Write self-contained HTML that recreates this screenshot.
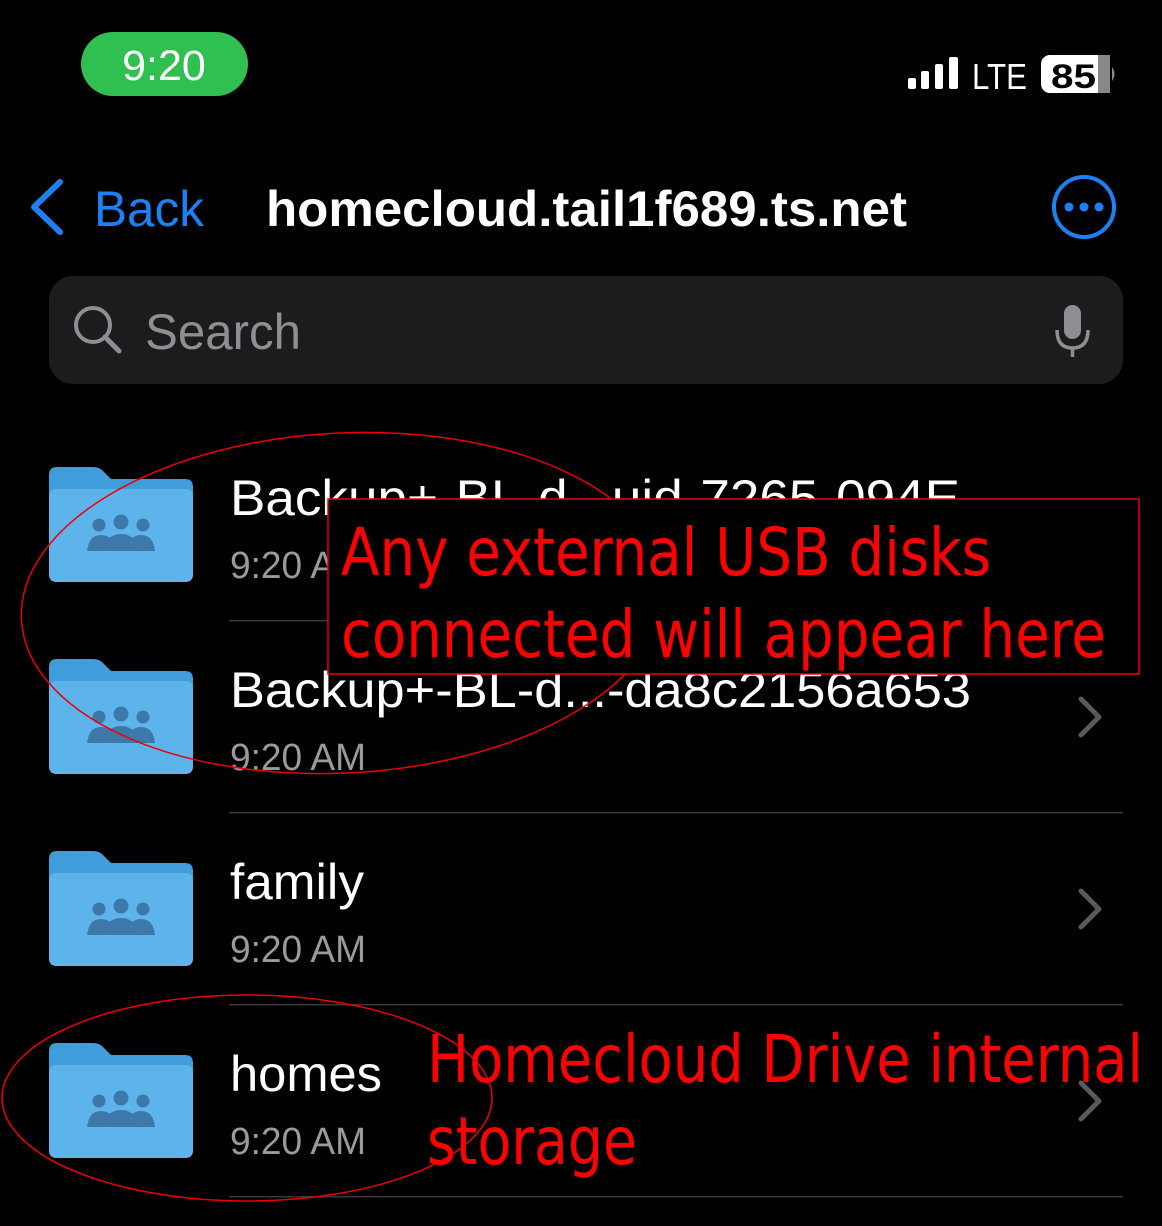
<!DOCTYPE html>
<html><head><meta charset="utf-8"><style>
html,body{margin:0;padding:0;background:#000;width:1162px;height:1226px;overflow:hidden}
svg{display:block}
</style></head><body>
<svg width="1162" height="1226" viewBox="0 0 1162 1226" xmlns="http://www.w3.org/2000/svg" font-family="Liberation Sans, sans-serif">
<defs>
<g id="folder">
<path d="M0 8 Q0 0 8 0 H44 Q50 0 54 4 L62 12 H136 Q144 12 144 20 V107 Q144 115 136 115 H8 Q0 115 0 107 Z" fill="#3f9ddc"/>
<path d="M0 30 Q0 22 8 22 H136 Q144 22 144 30 V107 Q144 115 136 115 H8 Q0 115 0 107 Z" fill="#5cb4ea"/>
<g fill="#3d78a8">
<circle cx="50" cy="58" r="6.5"/><circle cx="72" cy="55" r="7.5"/><circle cx="94" cy="58" r="6.5"/>
<path d="M38 84 Q40 68 52 68 Q58 68 62 72 Q56 76 55 84 Z"/>
<path d="M106 84 Q104 68 92 68 Q86 68 82 72 Q88 76 89 84 Z"/>
<path d="M55 84 Q57 67 72 67 Q87 67 89 84 Z"/>
</g>
</g>
<path id="chev" d="M0 0 L18 18 L0 36" fill="none" stroke="#5a5a5e" stroke-width="5" stroke-linecap="round" stroke-linejoin="round"/>
</defs>

<!-- status bar -->
<rect x="81" y="32" width="167" height="64" rx="32" fill="#30c04f"/>
<text x="164" y="80" font-size="43" fill="#fff" text-anchor="middle">9:20</text>
<rect x="908" y="78" width="8" height="11" rx="2" fill="#fff"/>
<rect x="921" y="71" width="8" height="18" rx="2" fill="#fff"/>
<rect x="935" y="64" width="8" height="25" rx="2" fill="#fff"/>
<rect x="949" y="57" width="9" height="32" rx="2" fill="#fff"/>
<text x="972" y="89" font-size="36" fill="#fff" textLength="55" lengthAdjust="spacingAndGlyphs">LTE</text>
<rect x="1041" y="55" width="69" height="38" rx="9" fill="#fff"/>
<rect x="1098" y="55" width="12" height="38" fill="#888"/>
<path d="M1112 67 Q1117 74 1112 81 Z" fill="#888"/>
<text x="1051" y="88" font-size="34" font-weight="bold" fill="#000" textLength="45" lengthAdjust="spacingAndGlyphs">85</text>

<!-- nav -->
<path d="M60 182 L34 207 L60 232" fill="none" stroke="#1a82f5" stroke-width="6" stroke-linecap="round" stroke-linejoin="round"/>
<text x="94" y="226" font-size="50" fill="#1a82f5" textLength="110" lengthAdjust="spacingAndGlyphs">Back</text>
<text x="266" y="226" font-size="50" font-weight="bold" fill="#fff" textLength="641" lengthAdjust="spacingAndGlyphs">homecloud.tail1f689.ts.net</text>
<circle cx="1084" cy="207" r="30" fill="none" stroke="#1a82f5" stroke-width="4"/>
<circle cx="1069" cy="207" r="4.5" fill="#1a82f5"/><circle cx="1084" cy="207" r="4.5" fill="#1a82f5"/><circle cx="1099" cy="207" r="4.5" fill="#1a82f5"/>

<!-- search -->
<rect x="49" y="276" width="1074" height="108" rx="24" fill="#1c1c1e"/>
<circle cx="93" cy="325" r="17" fill="none" stroke="#8e8e93" stroke-width="4"/>
<path d="M105 337 L119 351" stroke="#8e8e93" stroke-width="5" stroke-linecap="round"/>
<text x="145" y="349" font-size="50" fill="#8e8e93" textLength="156" lengthAdjust="spacingAndGlyphs">Search</text>
<rect x="1064" y="305" width="17" height="34" rx="8.5" fill="#8e8e93"/>
<path d="M1057 330 Q1057 348 1072.5 348 Q1088 348 1088 330" fill="none" stroke="#8e8e93" stroke-width="3.5"/>
<path d="M1072.5 348 V357" stroke="#8e8e93" stroke-width="3.5"/>

<!-- rows -->
<use href="#folder" x="49" y="467"/>
<use href="#folder" x="49" y="659"/>
<use href="#folder" x="49" y="851"/>
<use href="#folder" x="49" y="1043"/>
<g font-size="50" fill="#fff">
<text x="230" y="515" textLength="730" lengthAdjust="spacingAndGlyphs">Backup+-BL-d...uid-7265-094E</text>
<text x="230" y="707" textLength="741" lengthAdjust="spacingAndGlyphs">Backup+-BL-d...-da8c2156a653</text>
<text x="230" y="899" textLength="134" lengthAdjust="spacingAndGlyphs">family</text>
<text x="230" y="1091" textLength="152" lengthAdjust="spacingAndGlyphs">homes</text>
</g>
<g font-size="38" fill="#9a9a9e">
<text x="230" y="578" textLength="136" lengthAdjust="spacingAndGlyphs">9:20 AM</text>
<text x="230" y="770" textLength="136" lengthAdjust="spacingAndGlyphs">9:20 AM</text>
<text x="230" y="962" textLength="136" lengthAdjust="spacingAndGlyphs">9:20 AM</text>
<text x="230" y="1154" textLength="136" lengthAdjust="spacingAndGlyphs">9:20 AM</text>
</g>
<g fill="#38383a"><rect x="229" y="620" width="894" height="1.5"/><rect x="229" y="812" width="894" height="1.5"/><rect x="229" y="1004" width="894" height="1.5"/><rect x="229" y="1196" width="894" height="1.5"/></g>
<use href="#chev" x="1081" y="699"/>
<use href="#chev" x="1081" y="891"/>
<use href="#chev" x="1081" y="1083"/>

<!-- annotations -->
<ellipse cx="343" cy="603" rx="322" ry="170" transform="rotate(-3 343 603)" fill="none" stroke="#e00" stroke-width="1.5"/>
<rect x="328" y="499" width="811" height="175" fill="#000" stroke="#e00" stroke-width="1.5"/>
<g font-family="DejaVu Sans Condensed, DejaVu Sans, sans-serif" fill="#f00" font-size="66">
<text x="341" y="575" textLength="650" lengthAdjust="spacingAndGlyphs">Any external USB disks</text>
<text x="341" y="657" textLength="765" lengthAdjust="spacingAndGlyphs">connected will appear here</text>
<text x="427" y="1082" textLength="716" lengthAdjust="spacingAndGlyphs">Homecloud Drive internal</text>
<text x="427" y="1164" textLength="210" lengthAdjust="spacingAndGlyphs">storage</text>
</g>
<ellipse cx="247" cy="1098" rx="245" ry="103" fill="none" stroke="#e00" stroke-width="1.5"/>
</svg>
</body></html>
